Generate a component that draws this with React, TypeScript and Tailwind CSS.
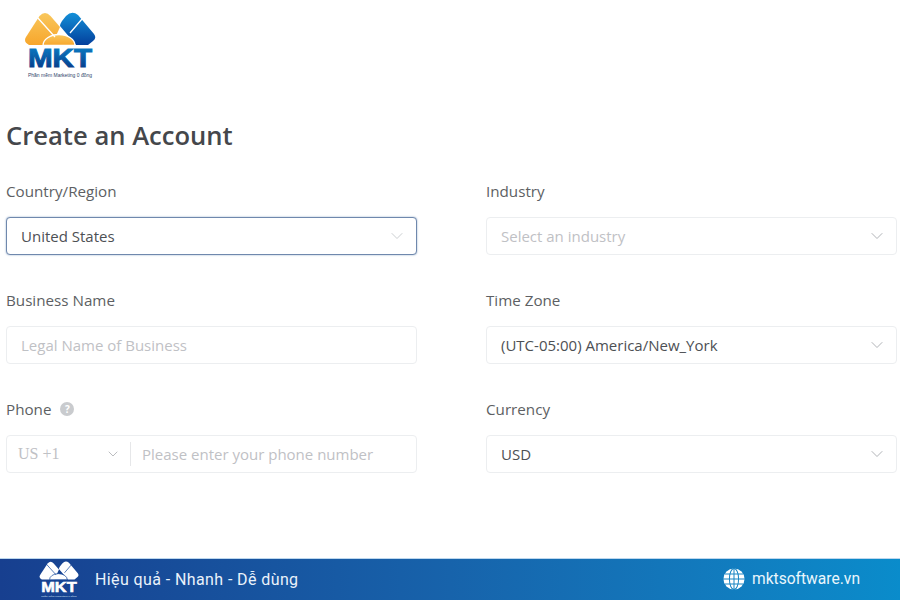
import React from 'react';
import { ChevronDown } from 'lucide-react';

const Logo: React.FC<{ mono?: boolean; className?: string }> = ({ mono, className }) => {
  const id = mono ? 'm' : 'c';
  const gap = mono ? '#174a9c' : '#fff';
  return (
    <svg viewBox="24 12 74 68" className={className}>
      <defs>
        <linearGradient id={`${id}-orange`} x1="0" y1="0" x2="0" y2="1">
          <stop offset="0" stopColor="#f9c75c" />
          <stop offset="1" stopColor="#f7a62c" />
        </linearGradient>
        <linearGradient id={`${id}-blue`} x1="0" y1="0" x2="0" y2="1">
          <stop offset="0" stopColor="#1390d8" />
          <stop offset="1" stopColor="#033f9c" />
        </linearGradient>
        <linearGradient id={`${id}-text`} x1="0" y1="0" x2="0" y2="1">
          <stop offset="0" stopColor="#0b86cd" />
          <stop offset="1" stopColor="#06307f" />
        </linearGradient>
      </defs>
      <path
        d="M39.500 16Q45 10 50.500 16L60 27L52 45L29 45Q23 42 26 37Z"
        fill={mono ? '#fff' : `url(#${id}-orange)`}
      />
      <path
        d="M66 16Q72 10 78 15L94 34Q97 38 93 41L88 45L76 45L60 26Q60 24 62 21Z"
        fill={mono ? '#fff' : `url(#${id}-blue)`}
      />
      <path
        d="M43 45.500A16 11 0 0 1 75 45.500Z"
        fill={mono ? '#fff' : `url(#${id}-orange)`}
        stroke={gap}
        strokeWidth="1.300"
      />
      <path d="M37 17L55 37M82 19L70 33" stroke={gap} strokeWidth="1.300" />
      <text
        x="60"
        y="67"
        textAnchor="middle"
        fontFamily="'Liberation Sans', sans-serif"
        fontWeight="700"
        fontSize="26"
        textLength="64"
        lengthAdjust="spacingAndGlyphs"
        stroke={mono ? '#fff' : `url(#${id}-text)`}
        strokeWidth="1"
        fill={mono ? '#fff' : `url(#${id}-text)`}
      >
        MKT
      </text>
      <text
        x="60"
        y="77"
        textAnchor="middle"
        fontFamily="'Liberation Sans', sans-serif"
        fontSize="4.500"
        textLength="64"
        lengthAdjust="spacingAndGlyphs"
        fill={mono ? '#dbe7f7' : '#31456b'}
      >
        Phần mềm Marketing 0 đồng
      </text>
    </svg>
  );
};

const Globe: React.FC = () => (
  <svg viewBox="0 0 24 24" className="w-[22px] h-[22px]">
    <circle cx="12" cy="12" r="11.500" fill="#fff" />
    <g stroke="#1a86c4" strokeWidth="1.100" fill="none">
      <ellipse cx="12" cy="12" rx="5" ry="11.500" />
      <path d="M12 0v24M0 12h24M2 6.500h20M2 17.500h20" />
    </g>
  </svg>
);

const Field: React.FC<{ label: string; children: React.ReactNode; help?: boolean }> = ({ label, children, help }) => (
  <div>
    <div className="flex items-center gap-[9px] h-[18px] text-[15.200px] leading-[16px] text-[#5d5f63]">
      {label}
      {help && (
        <span className="flex items-center justify-center w-[14px] h-[14px] rounded-full bg-[#c9cbce] text-white text-[10px] font-bold">
          ?
        </span>
      )}
    </div>
    <div className="mt-[17px]">{children}</div>
  </div>
);

const Select: React.FC<{ value: string; placeholder?: boolean; focused?: boolean }> = ({ value, placeholder, focused }) => (
  <div
    className={`flex items-center justify-between h-[38px] pl-[14px] pr-[9px] rounded-[4px] bg-white border text-[15px] ${
      focused ? 'border-[#6f88ad] shadow-[0_0_2px_#8fa6c6]' : 'border-[#eceef0]'
    } ${placeholder ? 'text-[#bfc1c5]' : 'text-[#4d5054]'}`}
  >
    <span>{value}</span>
    <ChevronDown size={20} strokeWidth={1.100} className={focused ? 'text-[#c6c9cd]' : 'text-[#a9acb0]'} />
  </div>
);

export default function App() {
  return (
    <div className="flex flex-col h-[600px] bg-white font-['Open_Sans',sans-serif]">
      {/* Logo */}
      <div className="pl-[24px] pt-[12px]">
        <Logo className="w-[74px] h-[68px]" />
      </div>

      {/* Form */}
      <main className="flex-1 px-[6px] pt-[38px]">
        <h1 className="text-[25.600px] leading-[36px] font-semibold text-[#45474b]">Create an Account</h1>

        <div className="mt-[28px] grid grid-cols-[411px_411px] gap-x-[69px] gap-y-[36px]">
          <Field label="Country/Region">
            <Select value="United States" focused />
          </Field>
          <Field label="Industry">
            <Select value="Select an industry" placeholder />
          </Field>
          <Field label="Business Name">
            <div className="flex items-center h-[38px] pl-[14px] rounded-[4px] border border-[#eceef0] text-[15px] text-[#bfc1c5]">
              Legal Name of Business
            </div>
          </Field>
          <Field label="Time Zone">
            <Select value="(UTC-05:00) America/New_York" />
          </Field>
          <Field label="Phone" help>
            <div className="flex items-center h-[38px] rounded-[4px] border border-[#eceef0] text-[15px] text-[#bfc1c5]">
              <div className="flex items-center justify-between w-[124px] h-[24px] pl-[11px] pr-[9px] border-r border-[#e6e7e9]">
                <span className="font-['Liberation_Serif',serif] text-[16px]">US +1</span>
                <ChevronDown size={16} strokeWidth={1.200} className="text-[#a9acb0]" />
              </div>
              <span className="ml-[11px]">Please enter your phone number</span>
            </div>
          </Field>
          <Field label="Currency">
            <Select value="USD" />
          </Field>
        </div>
      </main>

      {/* Footer */}
      <footer className="flex items-center justify-between h-[42px] border-t border-[#bcd7ee] bg-gradient-to-r from-[#173f8f] via-[#1763ab] to-[#0a8ccb] pl-[39px] pr-[40px] text-white font-['Roboto',sans-serif]">
        <div className="flex items-center gap-[15px]">
          <Logo mono className="w-[41px] h-[38px]" />
          <span className="text-[16px] tracking-[.4px] text-[#eaf2fb]">Hiệu quả - Nhanh - Dễ dùng</span>
        </div>
        <div className="flex items-center gap-[7px]">
          <Globe />
          <span className="text-[15.600px] text-[#eaf6fc]">mktsoftware.vn</span>
        </div>
      </footer>
    </div>
  );
}
